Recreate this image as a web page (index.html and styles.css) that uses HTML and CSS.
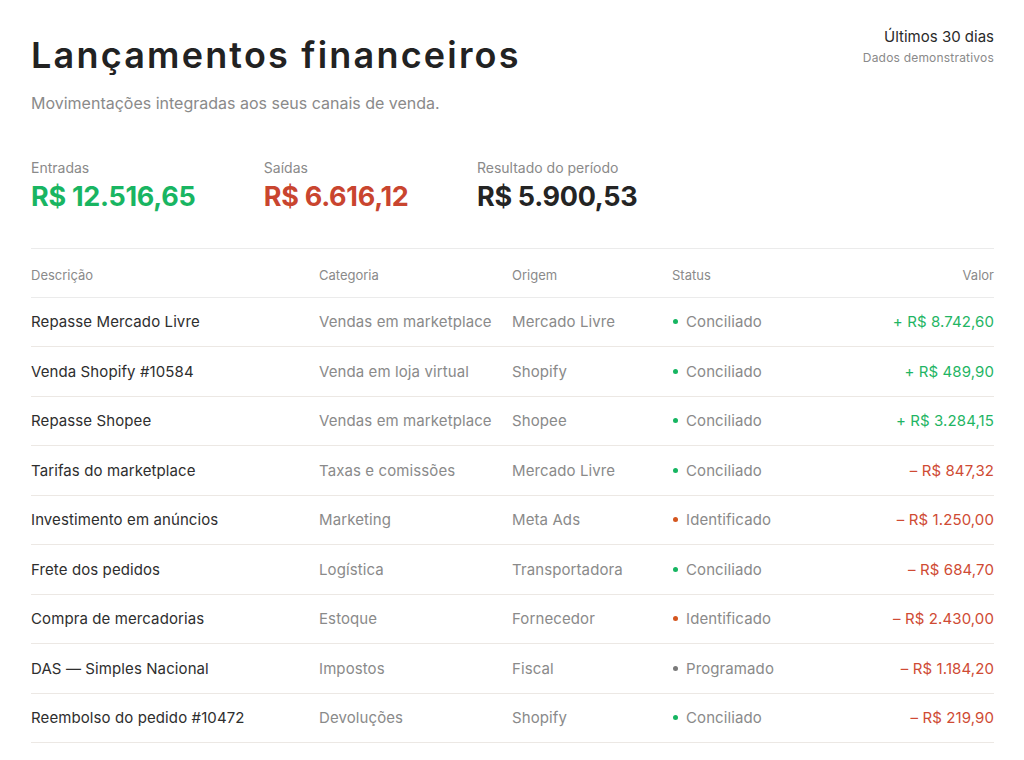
FILE: index.html
```html
<!DOCTYPE html>
<html lang="pt-BR">
<head>
<meta charset="utf-8">
<title>Lançamentos financeiros</title>
<link rel="stylesheet" href="styles.css">
</head>
<body>
<main class="page">
  <header class="top">
    <div class="heading">
      <h1 class="title">Lançamentos financeiros</h1>
      <p class="subtitle">Movimentações integradas aos seus canais de venda.</p>
    </div>
    <div class="period">
      <div class="period-main">Últimos 30 dias</div>
      <div class="period-note">Dados demonstrativos</div>
    </div>
  </header>

  <section class="summary">
    <div class="stat">
      <div class="stat-label">Entradas</div>
      <div class="stat-value in">R$ 12.516,65</div>
    </div>
    <div class="stat">
      <div class="stat-label">Saídas</div>
      <div class="stat-value out">R$ 6.616,12</div>
    </div>
    <div class="stat">
      <div class="stat-label">Resultado do período</div>
      <div class="stat-value net">R$ 5.900,53</div>
    </div>
  </section>

  <table class="ledger">
    <thead>
      <tr>
        <th class="c-desc">Descrição</th>
        <th class="c-cat">Categoria</th>
        <th class="c-orig">Origem</th>
        <th class="c-status">Status</th>
        <th class="c-val">Valor</th>
      </tr>
    </thead>
    <tbody>
      <tr><td class="c-desc">Repasse Mercado Livre</td><td class="c-cat">Vendas em marketplace</td><td class="c-orig">Mercado Livre</td><td class="c-status"><span class="dot ok"></span>Conciliado</td><td class="c-val in">+ R$ 8.742,60</td></tr>
      <tr><td class="c-desc">Venda Shopify #10584</td><td class="c-cat">Venda em loja virtual</td><td class="c-orig">Shopify</td><td class="c-status"><span class="dot ok"></span>Conciliado</td><td class="c-val in">+ R$ 489,90</td></tr>
      <tr><td class="c-desc">Repasse Shopee</td><td class="c-cat">Vendas em marketplace</td><td class="c-orig">Shopee</td><td class="c-status"><span class="dot ok"></span>Conciliado</td><td class="c-val in">+ R$ 3.284,15</td></tr>
      <tr><td class="c-desc">Tarifas do marketplace</td><td class="c-cat">Taxas e comissões</td><td class="c-orig">Mercado Livre</td><td class="c-status"><span class="dot ok"></span>Conciliado</td><td class="c-val out">– R$ 847,32</td></tr>
      <tr><td class="c-desc">Investimento em anúncios</td><td class="c-cat">Marketing</td><td class="c-orig">Meta Ads</td><td class="c-status"><span class="dot id"></span>Identificado</td><td class="c-val out">– R$ 1.250,00</td></tr>
      <tr><td class="c-desc">Frete dos pedidos</td><td class="c-cat">Logística</td><td class="c-orig">Transportadora</td><td class="c-status"><span class="dot ok"></span>Conciliado</td><td class="c-val out">– R$ 684,70</td></tr>
      <tr><td class="c-desc">Compra de mercadorias</td><td class="c-cat">Estoque</td><td class="c-orig">Fornecedor</td><td class="c-status"><span class="dot id"></span>Identificado</td><td class="c-val out">– R$ 2.430,00</td></tr>
      <tr><td class="c-desc">DAS — Simples Nacional</td><td class="c-cat">Impostos</td><td class="c-orig">Fiscal</td><td class="c-status"><span class="dot sch"></span>Programado</td><td class="c-val out">– R$ 1.184,20</td></tr>
      <tr><td class="c-desc">Reembolso do pedido #10472</td><td class="c-cat">Devoluções</td><td class="c-orig">Shopify</td><td class="c-status"><span class="dot ok"></span>Conciliado</td><td class="c-val out">– R$ 219,90</td></tr>
    </tbody>
  </table>
</main>
</body>
</html>
```

FILE: styles.css
```css
* { box-sizing: border-box; }
html, body { margin: 0; padding: 0; background: #ffffff; }
body {
  font-family: Inter, "Noto Sans", "Liberation Sans", sans-serif;
  color: #2a2a2a;
}
.page {
  padding: 26px 30px 0 31px;
}
.top {
  display: flex;
  justify-content: space-between;
  align-items: flex-start;
}
.title {
  margin: 7px 0 0 0;
  font-size: 36px;
  font-weight: 600;
  line-height: 44px;
  letter-spacing: 2.2px;
  color: #222222;
}
.subtitle {
  margin: 16px 0 0 0;
  font-size: 16px;
  line-height: 20px;
  color: #8a8a8a;
}
.period {
  text-align: right;
  padding-top: 1px;
}
.period-main {
  font-size: 15px;
  line-height: 20px;
  color: #2a2a2a;
}
.period-note {
  margin-top: 3px;
  font-size: 12px;
  line-height: 16px;
  letter-spacing: 0.2px;
  color: #8a8a8a;
}
.summary {
  display: flex;
  gap: 68.5px;
  margin-top: 46px;
  padding-bottom: 35px;
  border-bottom: 1px solid #ebebeb;
}
.stat-label {
  font-size: 14px;
  line-height: 18px;
  color: #8a8a8a;
}
.stat-value {
  margin-top: 4px;
  font-size: 27px;
  line-height: 32px;
  font-weight: 700;
  letter-spacing: -0.3px;
}
.stat-value.in { color: #19b562; }
.stat-value.out { color: #c9452f; }
.stat-value.net { color: #242424; }
.ledger {
  width: 100%;
  border-collapse: collapse;
  table-layout: fixed;
}
.ledger th {
  font-size: 13px;
  font-weight: 400;
  color: #8a8a8a;
  text-align: left;
  height: 48px;
  padding: 5px 0 0 0;
  border-bottom: 1px solid #ebebeb;
}
.ledger td {
  font-size: 15px;
  letter-spacing: 0.1px;
  color: #8a8a8a;
  height: 49.5px;
  padding: 0;
  border-bottom: 1px solid #ece8e4;
  white-space: nowrap;
}
.ledger .c-desc { width: 288px; }
.ledger td.c-desc { color: #2e2e2e; }
.ledger .c-cat { width: 193px; }
.ledger .c-orig { width: 160px; }
.ledger .c-status { width: 160px; }
.ledger .c-val { text-align: right; }
.ledger td.c-val.in { color: #1fb564; }
.ledger td.c-val.out { color: #cf4b34; }
.dot {
  display: inline-block;
  width: 5px;
  height: 5px;
  border-radius: 50%;
  margin: 0 8px 3px 1px;
  vertical-align: middle;
}
.dot.ok { background: #16b561; }
.dot.id { background: #d4561f; }
.dot.sch { background: #7a7a7a; }
```
